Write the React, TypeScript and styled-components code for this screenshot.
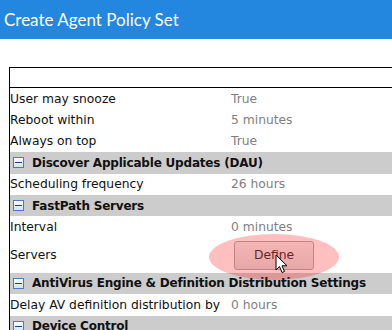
import React from "react";
import styled, {createGlobalStyle} from "styled-components";

const GlobalStyle = createGlobalStyle`
  html, body {
    margin: 0;
    padding: 0;
    background: #fff;
    overflow: hidden;
  }
  body {
    font-family: "DejaVu Sans", Verdana, sans-serif;
    font-size: 12.3px;
    color: #000;
  }
`;

const TitleBar = styled.div`
  height: 39px;
  background: #2386df;
  color: #fff;
  display: flex;
  align-items: center;
  padding-left: 4px;
  font-family: Lato, "Open Sans", sans-serif;
  font-size: 17px;
`;

const Content = styled.div`
  padding: 28px 0 0 9px;
`;

const Panel = styled.div`
  width: 460px;
  border-top: 1px solid #000;
  border-left: 1px solid #000;
`;

const EmptyRow = styled.div`
  height: 19px;
  border-bottom: 1px solid #000;
`;

const Row = styled.div<{ $tall?: boolean }>`
  display: grid;
  grid-template-columns: 221px 1fr;
  align-items: center;
  height: ${p => (p.$tall ? "35px" : "21.4px")};
`;

const Label = styled.div`
  white-space: nowrap;
  color: #111;
`;

const Value = styled.div`
  position: relative;
  color: #808080;
  white-space: nowrap;
`;

const SectionRow = styled.div`
  display: flex;
  align-items: center;
  gap: 8px;
  height: 21.4px;
  padding-left: 3px;
  background: #cccccc;
  font-size: 12px;
  font-weight: bold;
  letter-spacing: -0.2px;
  color: #111;
`;

const DefineButton = styled.button`
  width: 80px;
  height: 29px;
  margin-left: 3px;
  border: 1px solid #b0b0b0;
  border-radius: 3px;
  background: linear-gradient(#f2f2f2, #e0e0e0);
  font-family: "DejaVu Sans", Verdana, sans-serif;
  font-size: 12.3px;
  color: #333;
  padding: 0;
`;

const ClickHalo = styled.div`
  position: absolute;
  left: -22px;
  top: -7px;
  width: 130px;
  height: 46px;
  border-radius: 50%;
  background: rgba(255, 0, 0, 0.25);
  z-index: 2;
  pointer-events: none;
`;

const Pointer = styled.svg`
  position: absolute;
  left: 44px;
  top: 13px;
  z-index: 3;
`;

const CollapseIcon = () => (
  <svg width="11" height="11" viewBox="0 0 11 11">
    <defs>
      <linearGradient id="ci" x1="0" y1="0" x2="0" y2="1">
        <stop offset="0" stopColor="#ffffff" />
        <stop offset="1" stopColor="#cfe0f5" />
      </linearGradient>
    </defs>
    <rect x="0.5" y="0.5" width="10" height="10" fill="url(#ci)" stroke="#4a7bc8" />
    <rect x="2" y="5" width="7" height="1" fill="#1f3f8a" />
  </svg>
);

const Section = ({ title }: { title: string }) => (
  <SectionRow>
    <CollapseIcon />
    <span>{title}</span>
  </SectionRow>
);

const Setting = ({ label, value }: { label: string; value: string }) => (
  <Row>
    <Label>{label}</Label>
    <Value>{value}</Value>
  </Row>
);

export default function App() {
  return (
    <>
      <GlobalStyle />
      <TitleBar>Create Agent Policy Set</TitleBar>
      <Content>
        <Panel>
          <EmptyRow />
          <Setting label="User may snooze" value="True" />
          <Setting label="Reboot within" value="5 minutes" />
          <Setting label="Always on top" value="True" />
          <Section title="Discover Applicable Updates (DAU)" />
          <Setting label="Scheduling frequency" value="26 hours" />
          <Section title="FastPath Servers" />
          <Setting label="Interval" value="0 minutes" />
          <Row $tall>
            <Label>Servers</Label>
            <Value>
              <DefineButton>Define</DefineButton>
              <ClickHalo />
              <Pointer width="14" height="21" viewBox="0 0 14 21">
                <path
                  d="M1 1 L1 16 L4.5 12.5 L7 18.5 L9.5 17.5 L7 11.8 L12 11.8 Z"
                  fill="#fff"
                  stroke="#000"
                  strokeWidth="1"
                  strokeLinejoin="round"
                />
              </Pointer>
            </Value>
          </Row>
          <Section title="AntiVirus Engine & Definition Distribution Settings" />
          <Setting label="Delay AV definition distribution by" value="0 hours" />
          <Section title="Device Control" />
        </Panel>
      </Content>
    </>
  );
}
